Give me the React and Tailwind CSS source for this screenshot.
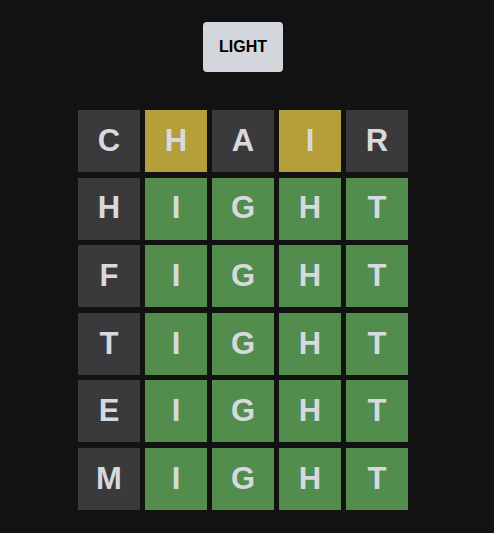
import React from "react";

const rows = [
  ["C", "H", "A", "I", "R"],
  ["H", "I", "G", "H", "T"],
  ["F", "I", "G", "H", "T"],
  ["T", "I", "G", "H", "T"],
  ["E", "I", "G", "H", "T"],
  ["M", "I", "G", "H", "T"],
];
const colors = [
  ["d", "y", "d", "y", "d"],
  ["d", "g", "g", "g", "g"],
  ["d", "g", "g", "g", "g"],
  ["d", "g", "g", "g", "g"],
  ["d", "g", "g", "g", "g"],
  ["d", "g", "g", "g", "g"],
];
const bg = { d: "bg-[#3a3a3c]", y: "bg-[#b59f3b]", g: "bg-[#538d4e]" };

export default function App() {
  return (
    <div
      className="w-[494px] h-[533px] bg-[#121212] overflow-hidden"
      style={{ fontFamily: '"Liberation Sans", Arial, sans-serif' }}
    >
      <div className="w-[486px] flex flex-col items-center pt-[22px]">
        <button className="w-[80px] h-[50px] rounded-[4px] bg-[#d3d6da] text-black font-bold text-[16px]">
          LIGHT
        </button>
        <div className="mt-[38px] w-[330px] h-[400px] grid grid-cols-5 grid-rows-6 gap-x-[5px] gap-y-[5.5px]">
          {rows.map((r, i) =>
            r.map((ch, j) => (
              <div
                key={i + "-" + j}
                className={`${bg[colors[i][j]]} flex items-center justify-center text-[#d7dadc] font-bold text-[31px]`}
              >
                {ch}
              </div>
            ))
          )}
        </div>
      </div>
    </div>
  );
}
